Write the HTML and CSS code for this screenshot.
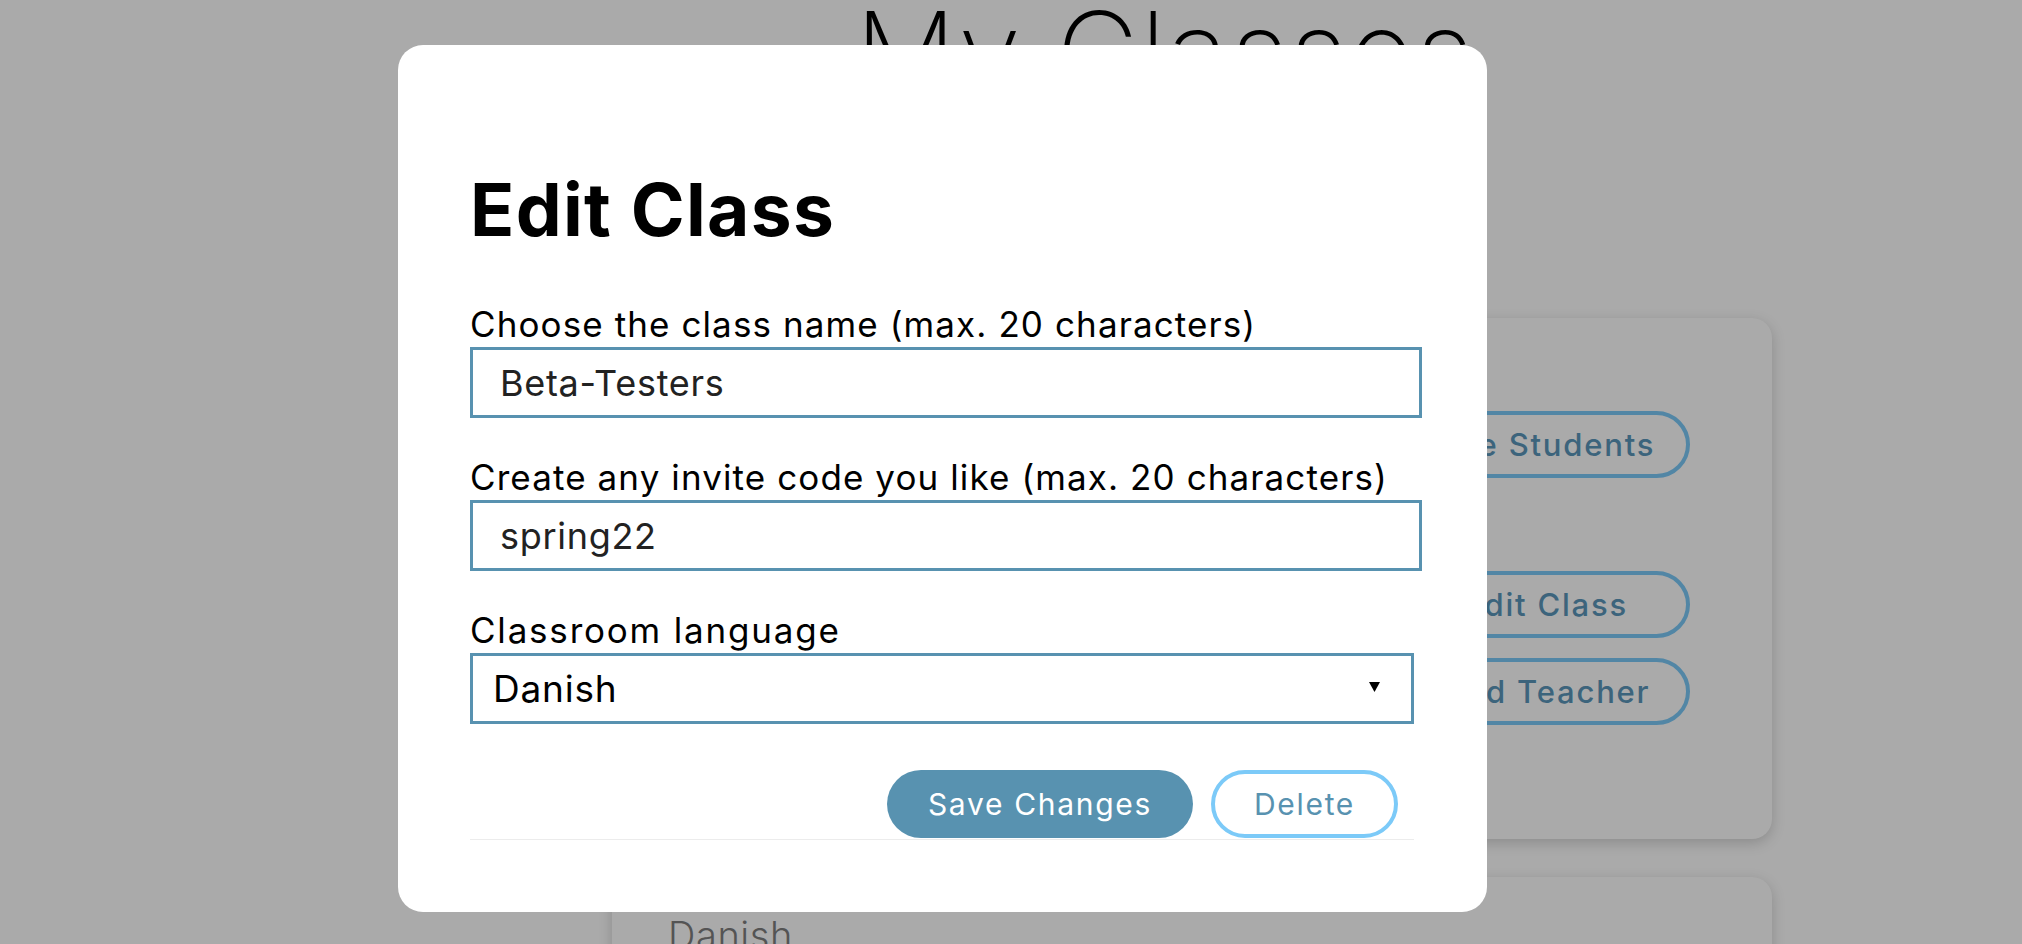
FILE: index.html
```html
<!DOCTYPE html>
<html lang="en">
<head>
<meta charset="utf-8">
<title>My Classes – Edit Class</title>
<link rel="stylesheet" href="styles.css">
</head>
<body>
<div class="page">
  <main class="content">
    <h1 class="page-title">My Classes</h1>
    <section class="class-card class-card--main">
      <div class="card-actions">
        <div class="action-group">
          <button class="pill" type="button">See Students</button>
        </div>
        <div class="action-group">
          <button class="pill" type="button">Edit Class</button>
          <button class="pill" type="button">Add Teacher</button>
        </div>
      </div>
    </section>
    <section class="class-card class-card--next">
      <p class="card-lang">Danish</p>
    </section>
  </main>
</div>

<div class="overlay"></div>

<div class="modal" role="dialog" aria-labelledby="edit-title">
  <h2 class="modal-title" id="edit-title">Edit Class</h2>
  <form class="form">
    <label class="field-label" for="cname">Choose the class name (max. 20 characters)</label>
    <input class="field-input" id="cname" type="text" value="Beta-Testers">
    <label class="field-label" for="ccode">Create any invite code you like (max. 20 characters)</label>
    <input class="field-input" id="ccode" type="text" value="spring22">
    <label class="field-label field-label--wide" for="clang">Classroom language</label>
    <div class="select-wrap">
      <select class="field-select" id="clang">
        <option>Danish</option>
      </select>
      <svg class="caret" width="11" height="11" viewBox="0 0 11 11" aria-hidden="true"><path d="M0 1 H11 L5.5 11 Z" fill="#000"/></svg>
    </div>
    <div class="actions">
      <button class="btn btn-primary" type="button">Save Changes</button>
      <button class="btn btn-outline" type="button">Delete</button>
    </div>
    <hr class="divider">
  </form>
</div>
</body>
</html>
```

FILE: styles.css
```css
html, body {
  margin: 0;
  padding: 0;
}

body {
  font-family: "Inter", "Liberation Sans", sans-serif;
  background: #ffffff;
  color: #000;
  height: 944px;
  overflow: hidden;
}

.page {
  min-height: 944px;
}

.content {
  margin-left: 612px;
  width: 1160px;
  padding-top: 2px;
}

.page-title {
  margin: 0 0 214px;
  padding-left: 243px;
  font-size: 113px;
  font-weight: 200;
  line-height: 0.9;
  letter-spacing: 2px;
  color: #000;
  white-space: nowrap;
}

.class-card {
  background: #ffffff;
  border-radius: 20px;
  box-shadow: 0 4px 14px rgba(0, 0, 0, 0.18);
  box-sizing: border-box;
}

.class-card--main {
  height: 521px;
  padding: 93px 82px 0;
  display: flex;
  justify-content: flex-end;
}

.card-actions {
  display: flex;
  flex-direction: column;
  align-items: flex-end;
}

.action-group {
  display: flex;
  flex-direction: column;
  gap: 20px;
}

.action-group + .action-group {
  margin-top: 93px;
}

.pill {
  width: 288px;
  height: 67px;
  box-sizing: border-box;
  border: 4px solid #7ccaf8;
  border-radius: 34px;
  background: #ffffff;
  color: #5a96bb;
  font-family: "Inter", "Liberation Sans", sans-serif;
  font-size: 31px;
  font-weight: 500;
  letter-spacing: 1.8px;
  padding: 0;
}

.class-card--next {
  margin-top: 38px;
  height: 220px;
  padding: 39px 56px;
}

.card-lang {
  margin: 0;
  font-size: 38px;
  font-weight: 300;
  line-height: 1;
  letter-spacing: 0.6px;
  color: #7f7f7f;
}

.overlay {
  position: fixed;
  inset: 0;
  background: rgba(0, 0, 0, 0.333);
}

.modal {
  position: fixed;
  left: 398px;
  top: 45px;
  width: 1089px;
  height: 867px;
  box-sizing: border-box;
  padding: 127px 65px 0 72px;
  background: #ffffff;
  border-radius: 25px;
}

.modal-title {
  margin: 0;
  font-size: 73px;
  font-weight: 700;
  line-height: 75px;
  letter-spacing: 1.3px;
  color: #000;
}

.form {
  display: flex;
  flex-direction: column;
  margin: 60px 0 0;
}

.field-label {
  display: block;
  font-size: 35px;
  line-height: 35px;
  letter-spacing: 1.1px;
  color: #000;
  margin-bottom: 5px;
  white-space: nowrap;
}

.field-label--wide {
  letter-spacing: 1.8px;
}

.field-input {
  width: 100%;
  height: 71px;
  box-sizing: border-box;
  border: 3px solid #5892b0;
  border-radius: 0;
  padding: 0 0 0 27px;
  margin: 0 0 42px;
  font-family: "Inter", "Liberation Sans", sans-serif;
  font-size: 36px;
  letter-spacing: 0.7px;
  color: #222;
  background: #fff;
  outline: none;
}

.select-wrap {
  position: relative;
  width: 944px;
}

.field-select {
  display: block;
  width: 944px;
  height: 71px;
  box-sizing: border-box;
  border: 3px solid #5892b0;
  border-radius: 0;
  padding: 0 0 0 20px;
  font-family: "Inter", "Liberation Sans", sans-serif;
  font-size: 37px;
  letter-spacing: 0.8px;
  color: #000;
  background: #fff;
  -webkit-appearance: none;
  appearance: none;
  outline: none;
}

.caret {
  position: absolute;
  right: 34px;
  top: 28px;
  pointer-events: none;
}

.actions {
  display: flex;
  justify-content: flex-end;
  gap: 18px;
  width: 944px;
  box-sizing: border-box;
  padding-right: 16px;
  margin-top: 46px;
}

.btn {
  height: 68px;
  box-sizing: border-box;
  border-radius: 34px;
  font-family: "Inter", "Liberation Sans", sans-serif;
  font-size: 30px;
  letter-spacing: 1.7px;
  padding: 0;
  cursor: pointer;
}

.btn-primary {
  width: 306px;
  background: #5892b0;
  color: #fff;
  border: none;
}

.btn-outline {
  width: 187px;
  background: #fff;
  color: #5892b0;
  border: 4px solid #7ccaf8;
}

.divider {
  width: 944px;
  margin: 1px 0 0;
  border: none;
  border-top: 1px solid #ececec;
  height: 0;
}
```
